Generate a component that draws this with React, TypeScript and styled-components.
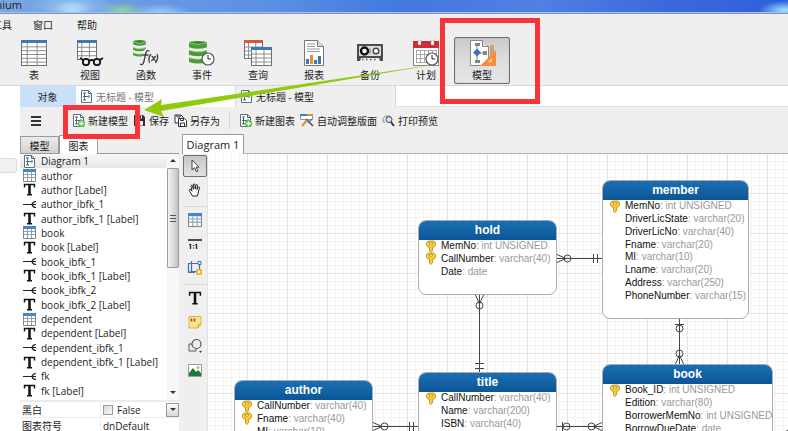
import React from "react";
import styled, { createGlobalStyle, css } from "styled-components";

const GlobalStyle = createGlobalStyle`
  *, *::before, *::after { box-sizing: border-box; }
  body {
    margin: 0;
    background: #efefef;
    color: #1c1c1c;
    font: 10px/14px "Open Sans", "Noto Sans CJK SC", sans-serif;
  }
  button, input {
    margin: 0;
    padding: 0;
    border: 0;
    background: none;
    color: inherit;
    font: inherit;
  }
  svg { display: block; flex: none; }
`;

const CJK = `"Noto Sans CJK SC", sans-serif`;

/* ---------- shell ---------- */

const Window = styled.div`
  position: relative;
  display: flex;
  flex-direction: column;
  height: 100vh;
  overflow: hidden;
`;

const TitleBar = styled.header`
  display: flex;
  flex: none;
  height: 14px;
  border-bottom: 1px solid #7f93b8;
  box-shadow: inset 0 -1px 0 #a9c0ec;
  overflow: hidden;
  background:
    radial-gradient(ellipse 20px 9px at 72px 10px, #b4dcf8, transparent),
    radial-gradient(ellipse 42px 12px at 72px 6px, #9ccaf2, transparent),
    radial-gradient(ellipse 24px 9px at 122px 11px, #8ed59a, transparent),
    radial-gradient(ellipse 30px 8px at 160px 12px, #9cc8f4, transparent),
    radial-gradient(ellipse 26px 9px at 785px 10px, #a4e6fa, transparent),
    linear-gradient(90deg, #7aa6e2 0, #6a9ce4 130px, #5a90e4 270px, #4478de 400px, #5080e2 540px, #3b6adc 660px, #2f5fdb 100%);
`;

const AppName = styled.span`
  display: flex;
  justify-content: flex-end;
  width: 22px;
  overflow: hidden;
  font-size: 11px;
  line-height: 10px;
`;

const MenuBar = styled.nav`
  display: flex;
  flex: none;
  height: 21px;
  gap: 21px;
`;

const MenuItem = styled.button<{ $clipped?: boolean }>`
  display: flex;
  align-items: center;
  justify-content: flex-end;
  width: ${(p) => (p.$clipped ? "12px" : "auto")};
  margin-right: ${(p) => (p.$clipped ? "0" : "3px")};
  overflow: hidden;
  font-family: ${CJK};
  white-space: nowrap;
`;

const Ribbon = styled.div`
  display: flex;
  flex: none;
  height: 51px;
  padding: 2px 6px 2px;
  border-bottom: 1px solid #d6d6d6;
`;

const RibbonButton = styled.button<{ $active?: boolean }>`
  display: flex;
  flex-direction: column;
  align-items: center;
  width: 56px;
  height: 47px;
  padding-top: 2px;
  gap: 1px;
  border: 1px solid transparent;
  border-radius: 2px;
  font-family: ${CJK};
  line-height: 16px;
  ${(p) =>
    p.$active &&
    css`
      border-color: #6f6f6f;
      background: linear-gradient(#c9c9c9, #dcdcdc 45%, #e6e6e6);
      box-shadow: inset 0 0 1px #888;
    `}
`;

const Body = styled.div`
  display: flex;
  flex: 1;
  min-height: 0;
`;

const ConnectionPane = styled.aside`
  flex: none;
  width: 20px;
  padding-top: 72px;
  background: #fff;
`;

const ConnectionRow = styled.div`
  height: 15px;
  margin-right: 3px;
  border: 1px solid #dcdcdc;
  border-left: 0;
  border-radius: 0 3px 3px 0;
  background: #f1f1f1;
`;

const Main = styled.main`
  display: flex;
  flex: 1;
  flex-direction: column;
  min-width: 0;
`;

const DocumentTabs = styled.div`
  display: flex;
  flex: none;
  height: 21px;
  background: #fff;
  border-bottom: 1px solid #e2e2e2;
`;

const DocumentTab = styled.button<{ $kind: "home" | "idle" | "open" }>`
  display: flex;
  align-items: center;
  justify-content: ${(p) => (p.$kind === "home" ? "center" : "flex-start")};
  width: ${(p) => (p.$kind === "home" ? "56px" : "160px")};
  height: 21px;
  padding: 0 4px;
  gap: 3px;
  border-right: 1px solid ${(p) => (p.$kind === "home" ? "transparent" : "#dadada")};
  background: ${(p) => ({ home: "#cae0fa", idle: "#fdfdfd", open: "#efefef" })[p.$kind]};
  color: ${(p) => (p.$kind === "idle" ? "#777" : "#1c1c1c")};
  font-family: ${CJK};
`;

const ActionBar = styled.div`
  display: flex;
  flex: none;
  align-items: center;
  height: 27px;
  padding-left: 10px;
  gap: 5px;
`;

const Action = styled.button`
  display: flex;
  align-items: center;
  gap: 3px;
  font-family: ${CJK};
`;

const MenuToggle = styled(Action)`
  margin-right: 25px;
`;

const ActionDivider = styled.span`
  width: 1px;
  height: 16px;
  margin: 0 4px;
  background: #d2d2d2;
`;

const Workspace = styled.div`
  display: flex;
  flex: 1;
  min-height: 0;
`;

/* ---------- explorer ---------- */

const Explorer = styled.section`
  display: flex;
  flex: none;
  flex-direction: column;
  width: 159px;
`;

const PaneTabs = styled.div`
  display: flex;
  flex: none;
  align-items: flex-end;
  height: 20px;
  border-bottom: 1px solid #9b9b9b;
`;

const PaneTab = styled.button<{ $open?: boolean }>`
  width: 39px;
  height: ${(p) => (p.$open ? "19px" : "17px")};
  margin-bottom: ${(p) => (p.$open ? "-1px" : "0")};
  border: 1px solid #9b9b9b;
  border-bottom: 0;
  background: ${(p) => (p.$open ? "#fff" : "linear-gradient(#ececec, #d2d2d2)")};
  font-family: ${CJK};
  line-height: 15px;
`;

const ListArea = styled.div`
  display: flex;
  flex: 1;
  min-height: 0;
  background: #fff;
`;

const ObjectList = styled.ul`
  display: grid;
  flex: 1;
  grid-auto-rows: 1fr;
  min-width: 0;
  margin: 0;
  padding: 0 0 2px;
  list-style: none;
`;

const ObjectRow = styled.button<{ $selected?: boolean }>`
  display: flex;
  align-items: center;
  width: 100%;
  height: 100%;
  padding-left: 3px;
  gap: 5px;
  border-radius: 2px;
  font-size: 10px;
  line-height: 14px;
  white-space: nowrap;
  ${(p) => p.$selected && css`background: linear-gradient(#f8f8f8, #e6e6e6);`}
`;

const ScrollTrack = styled.div`
  display: flex;
  flex: none;
  flex-direction: column;
  align-items: center;
  width: 12px;
  padding: 5px 0;
  gap: 5px;
  background: #f7f7f7;
`;

const ScrollThumb = styled.div`
  display: flex;
  align-items: center;
  justify-content: center;
  width: 12px;
  height: 100px;
  margin-bottom: auto;
  border: 1px solid #9c9c9c;
  border-radius: 1px;
  background: linear-gradient(90deg, #f3f3f3, #dcdcdc 50%, #c2c2c2);
`;

const Properties = styled.div`
  flex: none;
  height: 31px;
  border-top: 2px solid #ececec;
  background: #fff;
  overflow: hidden;
`;

const PropertyRow = styled.div`
  display: grid;
  grid-template-columns: 78px 1fr;
  align-items: center;
  height: 16px;
  padding-left: 2px;
  border-bottom: 1px solid #ededed;
`;

const PropertyName = styled.label`
  font-family: ${CJK};
`;

const PropertyValue = styled.div`
  display: flex;
  align-items: center;
  height: 15px;
  padding-left: 2px;
  gap: 4px;
  border-left: 1px solid #ededed;
  font-size: 10px;
`;

const Check = styled.input`
  appearance: none;
  width: 10px;
  height: 10px;
  border: 1px solid #9a9a9a;
  background: linear-gradient(135deg, #d3d8dd, #f8f8f8);
`;

const TextInput = styled.input`
  width: 100%;
`;

const DropButton = styled.button`
  display: flex;
  align-items: center;
  justify-content: center;
  width: 13px;
  height: 14px;
  margin-left: auto;
  border: 1px solid #999;
  background: linear-gradient(#fafafa, #d8d8d8);
`;

/* ---------- designer ---------- */

const Designer = styled.section`
  display: flex;
  flex: 1;
  flex-direction: column;
  min-width: 0;
  margin-left: 3px;
`;

const DiagramTabs = styled.div`
  display: flex;
  flex: none;
  height: 20px;
  border-bottom: 1px solid #b4b4b4;
`;

const DiagramTab = styled.button`
  width: 62px;
  height: 20px;
  border: 1px solid #9b9b9b;
  border-bottom: 0;
  background: #fff;
  font-size: 11px;
`;

const DesignArea = styled.div`
  display: flex;
  flex: 1;
  min-height: 0;
`;

const Palette = styled.div`
  display: flex;
  flex: none;
  flex-direction: column;
  width: 25px;
  padding: 1px 0 0 1px;
  gap: 2px;
`;

const Tool = styled.button<{ $active?: boolean }>`
  display: flex;
  align-items: center;
  justify-content: center;
  width: 24px;
  height: 22px;
  border: 1px solid ${(p) => (p.$active ? "#6f6f6f" : "transparent")};
  border-radius: 2px;
  background: ${(p) => (p.$active ? "linear-gradient(#c6c6c6, #e2e2e2)" : "none")};
`;

const ToolDivider = styled.div`
  height: 4px;
  border-bottom: 1px solid #d8d8d8;
`;

const Canvas = styled.div`
  position: relative;
  flex: 1;
  overflow: hidden;
  background-color: #fff;
  background-image:
    linear-gradient(90deg, #e2e2e2 1px, transparent 1px),
    linear-gradient(#e2e2e2 1px, transparent 1px),
    linear-gradient(90deg, #f3f3f3 1px, transparent 1px),
    linear-gradient(#f3f3f3 1px, transparent 1px);
  background-size: 40px 40px, 40px 40px, 8px 8px, 8px 8px;
  background-position: 0 39px;
`;

const Links = styled.svg`
  position: absolute;
  inset: 0;
`;

const Entity = styled.article<{ $x: number; $y: number; $w: number; $h: number }>`
  position: absolute;
  left: ${(p) => p.$x}px;
  top: ${(p) => p.$y}px;
  display: flex;
  flex-direction: column;
  width: ${(p) => p.$w}px;
  height: ${(p) => p.$h}px;
  border: 1px solid #a9adb1;
  border-radius: 8px;
  background: #fff;
  overflow: hidden;
  font: 10px/12px "Liberation Sans", Arial, sans-serif;
`;

const EntityName = styled.h2`
  flex: none;
  margin: -1px -1px 0;
  height: 20px;
  background: linear-gradient(#1c70b4, #0c5595);
  color: #fff;
  font-size: 12px;
  font-weight: 700;
  line-height: 20px;
  text-align: center;
`;

const Columns = styled.ul`
  display: grid;
  flex: 1;
  grid-auto-rows: 1fr;
  margin: 0;
  padding: 0 0 16px;
  list-style: none;
`;

const Column = styled.li`
  display: grid;
  grid-template-columns: 15px 1fr;
  align-items: center;
  min-height: 0;
  padding-left: 7px;
  color: #999;
  white-space: nowrap;
`;

const KeySlot = styled.span`
  display: flex;
  align-items: center;
  height: 12px;
`;

const ColumnName = styled.span`
  color: #111;
`;

/* ---------- annotations ---------- */

const Highlight = styled.div<{ $x: number; $y: number; $w: number; $h: number }>`
  position: absolute;
  left: ${(p) => p.$x}px;
  top: ${(p) => p.$y}px;
  width: ${(p) => p.$w}px;
  height: ${(p) => p.$h}px;
  border: 5px solid #f93439;
  pointer-events: none;
`;

const Arrow = styled.svg`
  position: absolute;
  left: 0;
  top: 0;
  pointer-events: none;
`;

/* ---------- icons ---------- */

type Size = { s?: number };

const Sheet = ({ x = 0, y = 0, w = 26, h = 26, head = "#4178b4" }) => {
  const top = y + 3;
  const rows = Math.round((h - 3) / 4);
  return (
    <g>
      <rect x={x + 0.5} y={y + 0.5} width={w - 1} height={h - 1} fill="#fff" stroke="#6f6f6f" />
      <path
        d={
          Array.from({ length: rows - 1 }, (_, i) => `M${x + 1} ${top + (i + 1) * ((h - 3) / rows)}h${w - 2}`).join("") +
          `M${x + w * 0.24} ${top}v${h - 4}M${x + w * 0.62} ${top}v${h - 4}`
        }
        stroke="#8d8d8d"
        fill="none"
      />
      <rect x={x} y={y} width={w} height={3} fill={head} />
    </g>
  );
};

const Cylinder = ({ w = 19, h = 22 }) => (
  <g fill="#4d9b36">
    {[0, 1, 2].map((i) => {
      const b = h / 3;
      const y = i * b;
      return (
        <g key={i}>
          <path d={`M0 ${y + 2}Q${w / 2} ${y + 5} ${w} ${y + 2}V${y + b - 1}Q${w / 2} ${y + b + 2} 0 ${y + b - 1}Z`} />
          {i === 0 && <ellipse cx={w / 2} cy={2} rx={w / 2} ry={2} fill="#3d8a2b" />}
          <path d={`M0 ${y + 2}Q${w / 2} ${y + 5} ${w} ${y + 2}`} fill="none" stroke="#a8d49a" strokeWidth=".8" />
        </g>
      );
    })}
  </g>
);

const Clock = ({ x = 19, y = 19, r = 6 }) => (
  <g fill="#fff" stroke="#555">
    <circle cx={x} cy={y} r={r} strokeWidth="1.2" />
    <path d={`M${x} ${y - r + 2}V${y}H${x + r - 3}`} fill="none" stroke="#222" />
  </g>
);

const Big = ({ children }: { children: React.ReactNode }) => (
  <svg width="28" height="26" viewBox="0 0 28 26" aria-hidden="true">
    {children}
  </svg>
);

const TableBig = () => <Big><Sheet x={1} /></Big>;
const ViewBig = () => (
  <Big>
    <Sheet x={1} w={20} h={20} />
    <path d="M4 18h24v8H4z" fill="#efefef" />
    <g fill="#efefef" stroke="#151515" strokeWidth="1.8">
      <circle cx="10" cy="22" r="3.2" />
      <circle cx="21" cy="22" r="3.2" />
      <path d="M13 21q2.500-2 5 0M7 20l-3-2M24 20l3-2" fill="none" />
    </g>
  </Big>
);
const FunctionBig = () => (
  <Big>
    <g transform="translate(1 0)"><Cylinder w={13} h={16} /></g>
    <path d="M17 10c-4-1-4 4-5 9-.6 3-1.500 7-4 5M10.500 14h5" stroke="#efefef" strokeWidth="4" fill="none" />
    <path d="M17.500 11c-3.500-2-4 3-5 8-.7 3.500-1.500 7-4.500 5M10.500 15h6M19 14c-2.500 3-2.500 6-1.500 9M25 14c1.500 3 .5 6-1.500 9M19.500 16.500c2-1 2 5 4.500 4M24 16.500c-2 0-3 4.500-5 4" stroke="#3f3f3f" strokeWidth="1.300" fill="none" />
  </Big>
);
const EventBig = () => <Big><g transform="translate(1 1)"><Cylinder w={18} h={22} /></g><Clock x={20} /></Big>;
const QueryBig = () => <Big><Sheet w={19} h={19} x={0} head="#d9583c" /><Sheet x={7} y={7} w={21} h={19} /></Big>;
const ReportBig = () => (
  <Big>
    <path d="M4.500.5h13l6 6v19h-19z" fill="#fff" stroke="#777" />
    <path d="M17.500.5v6h6" fill="#ddd" stroke="#777" />
    <path d="M7 4h8M7 6.500h8M7 9h13M7 11.500h13" stroke="#999" />
    <path d="M6 19h3v5H6zM18 16h3v8h-3z" fill="#3f74b5" />
    <path d="M10 15h3v9h-3z" fill="#e88b34" />
    <path d="M14 20h3v4h-3z" fill="#3f74b5" />
  </Big>
);
const BackupBig = () => (
  <Big>
    <path d="M1 4h26v17h-3l-1-3H5l-1 3H1z" fill="#4c4c4c" />
    <rect x="3" y="6" width="22" height="10" rx="1" fill="#dcdcdc" />
    <circle cx="8.500" cy="11" r="3.500" fill="#fff" stroke="#111" strokeWidth="2.400" />
    <circle cx="20" cy="11" r="2.800" fill="#fff" stroke="#444" strokeWidth="1.400" />
    <path d="M14 8.500v5" stroke="#777" />
    <path d="M6 19.500h1.500M10 19.500h1.500M14 19.500h1.500M18 19.500h1.500" stroke="#555" strokeWidth="1.500" />
  </Big>
);
const ScheduleBig = () => (
  <Big>
    <rect x="1.500" y="1.500" width="25" height="24" fill="#fff" stroke="#888" />
    <path d="M4.500 10v13M8.500 10v13M12.500 10v13M16.500 10v13M20.500 10v13M24.500 10v13M4 10.500h21M4 14.500h21M4 18.500h21M4 22.500h21" stroke="#aaa" />
    <path d="M1 1h26v7H1z" fill="#d12c36" />
    <path d="M6 0h3v5H6zM19 0h3v5h-3z" fill="#fff" stroke="#888" strokeWidth=".5" />
    <Clock x={20} y={19} />
  </Big>
);
const ModelBig = () => (
  <Big>
    <path d="M2.500.5h12l6 6v19h-18z" fill="#fff" stroke="#888" />
    <path d="M14.500.5v6h6" fill="#ddd" stroke="#888" />
    <path d="M9 5v16M9 13h8" stroke="#888" />
    <path d="M7 3h5v3H7zM7 20h5v3H7zM15 11h4v4h-4z" fill="#858585" />
    <path d="M9 8.500l4 4-4 4-4-4z" fill="#3c75b7" />
    <path d="M22 5h4v20h-4z" fill="#cda36a" />
    <path d="M28 10v16H12z" fill="#f58d3c" />
    <path d="M24 18v4h-4z" fill="#fbd4ac" />
  </Big>
);

const TableSmall = ({ s = 13 }: Size) => (
  <svg width={s} height={s} viewBox="0 0 13 13" aria-hidden="true">
    <path d="M.5.5h12v12H.5z" fill="#fff" stroke="#7b8794" />
    <path d="M0 0h13v3H0z" fill="#4484c8" />
    <path d="M1 5.500h11M1 8.500h11M4.500 3v9M8.500 3v9" stroke="#92a0ae" />
  </svg>
);
const DiagramSmall = ({ plus }: { plus?: boolean }) => (
  <svg width="13" height="13" viewBox="0 0 13 13" aria-hidden="true">
    <path d="M1.500.5h7l3 3v9h-10z" fill="#fff" stroke="#5d7078" />
    <path d="M8.500.5v3h3M4.500 3v7M4.500 6.500h4M3 3h3M3 10h3M3 6.500h3M9 5v3" fill="none" stroke="#3f6b85" />
    {plus && (
      <>
        <circle cx="9.500" cy="9.500" r="3.500" fill="#52c034" />
        <path d="M9.500 7.200v4.600M7.200 9.500h4.600" stroke="#fff" strokeWidth="1.400" />
      </>
    )}
  </svg>
);
const TextSmall = ({ s = 13 }: Size) => (
  <svg width={s} height={s} viewBox="0 0 13 13" aria-hidden="true">
    <path d="M1.500 4.500V1.500h10v3M6.500 1.500v10M4 11.800h5" fill="none" stroke="#111" strokeWidth="1.400" />
    <path d="M6.500 1v11" stroke="#111" strokeWidth="2.400" />
  </svg>
);
const RelationSmall = () => (
  <svg width="13" height="13" viewBox="0 0 13 13" aria-hidden="true">
    <path d="M0 6.500h13M13 3.500c-2 0-3.500 1-4 3 .5 2 2 3 4 3" fill="none" stroke="#222" strokeWidth="1.200" />
  </svg>
);
const MenuSmall = () => (
  <svg width="12" height="12" viewBox="0 0 12 12" aria-hidden="true">
    <path d="M1 2h10M1 6h10M1 10h10" stroke="#333" strokeWidth="2" />
  </svg>
);
const SaveSmall = () => (
  <svg width="13" height="13" viewBox="0 0 13 13" aria-hidden="true">
    <path d="M1 1h9l2 2v9H1z" fill="#303030" />
    <path d="M4 1.500h5v3H4zM3 7h7v4.500H3z" fill="#eee" />
    <path d="M7 2h1v2H7z" fill="#303030" />
  </svg>
);
const SaveAsSmall = () => (
  <svg width="13" height="13" viewBox="0 0 13 13" aria-hidden="true">
    <path d="M1 1h6l2 2v6H1z" fill="#fff" stroke="#303030" />
    <path d="M3 1v2h3V1" fill="none" stroke="#303030" />
    <path d="M4.500 4.500h6l2 2v6h-8z" fill="#fff" stroke="#303030" />
    <path d="M6.500 4.500v2h3v-2M6.500 12V9h4v3" fill="none" stroke="#303030" />
  </svg>
);
const LayoutSmall = () => (
  <svg width="14" height="13" viewBox="0 0 14 13" aria-hidden="true">
    <path d="M.5.5h12v5H.5z" fill="#fff" stroke="#8b99a5" />
    <path d="M0 0h7v2H0z" fill="#3b7fca" />
    <path d="M7 0h6v2H7z" fill="#e68a2e" />
    <path d="M6 5l7 7" stroke="#555" strokeWidth="1.600" />
    <path d="M2 12l5-6" stroke="#e68a2e" strokeWidth="2" />
    <path d="M8 9l4-4" stroke="#3b7fca" strokeWidth="1.600" />
  </svg>
);
const PreviewSmall = () => (
  <svg width="13" height="13" viewBox="0 0 13 13" aria-hidden="true">
    <path d="M1 5l2-3h5M1 5v3h2" fill="#ddd" stroke="#999" />
    <circle cx="7" cy="5.500" r="3" fill="#cfe4f6" stroke="#444" />
    <path d="M9 8l3 4" stroke="#333" strokeWidth="2" />
  </svg>
);
const Caret = ({ up }: { up?: boolean }) => (
  <svg width="6" height="4" viewBox="0 0 6 4" aria-hidden="true">
    <path d={up ? "M3 0l3 3H0z" : "M0 0h6L3 3z"} fill="#333" />
  </svg>
);
const Grip = () => (
  <svg width="6" height="7" viewBox="0 0 6 7" aria-hidden="true">
    <path d="M0 .5h6M0 3.500h6M0 6.500h6" stroke="#555" />
  </svg>
);
const KeyIcon = () => (
  <svg width="10" height="13" viewBox="0 0 10 13" aria-hidden="true">
    <path d="M2 1h6l1.500 1.500v3L8 7H7v1l-1 1 1 1-2 2.500L3.500 11V7H2L.6 5.500v-3z" fill="#f7cb32" stroke="#b98b14" strokeWidth=".8" />
    <path d="M3.500 2.500h3v1.500h-3z" fill="#fff" stroke="#a77a10" strokeWidth=".6" />
  </svg>
);
const T = ({ children }: { children: React.ReactNode }) => (
  <svg width="16" height="16" viewBox="0 0 16 16" fill="none" aria-hidden="true">
    {children}
  </svg>
);
const CursorTool = () => (
  <T><path d="M5 2v10l2.500-2.300 1.800 4 1.600-.7-1.800-3.800H12z" fill="#fff" stroke="#444" /></T>
);
const HandTool = () => (
  <T>
    <path d="M5.500 14L2.800 9.500C1.500 7.500 3 6.800 4 8l1 1.200L4 4.500c-.3-1.700 1.400-1.700 1.700-.3l.7 3-.2-4.200c0-1.500 1.700-1.500 1.800 0l.2 4 .6-3.600c.3-1.400 1.800-1.100 1.600.2L10 7.500l.9-2c.6-1.300 2-.6 1.500.7-1 2.500-.9 5-2.200 7.800z" fill="#fff" stroke="#222" />
  </T>
);
const RatioTool = () => (
  <T>
    <path d="M1 4h14" stroke="#222" strokeWidth="1.600" />
    <path d="M3.500 8v5M2.500 9l1-1M9.500 8v5M8.500 9l1-1M6.500 9v1M6.500 11.500v1" stroke="#222" strokeWidth="1.300" />
  </T>
);
const LayerTool = () => (
  <T>
    <path d="M4.500 1v10.500H15M4.500 3.500h8V11M1 3.500h3.500M1.500 3v9.500H8M1.500 12.500l3-1" stroke="#3f70bd" strokeWidth="1.200" />
    <path d="M11 1.500h3v3h-3z" fill="#efefef" stroke="#3f70bd" />
    <path d="M9 9h6v6H9z" fill="#edb93b" />
    <circle cx="12" cy="12" r="1.200" fill="#fff" />
  </T>
);
const NoteTool = () => (
  <T>
    <path d="M2 2.500h12v8l-3 3.500H2z" fill="#fbe58a" stroke="#d5b64c" />
    <path d="M14 10.500h-3V14" fill="#e9cc62" stroke="#d5b64c" />
    <path d="M4.500 4.500v3M7.500 4.500v3" stroke="#a4482a" strokeWidth="1.600" />
  </T>
);
const ShapesTool = () => (
  <T>
    <path d="M2 6h7v7H2z" stroke="#555" fill="#eee" />
    <circle cx="9.500" cy="6" r="4.500" fill="#eee" stroke="#555" strokeWidth="1.200" />
    <path d="M12 13h3l-1.500 2z" fill="#333" />
  </T>
);
const ImageTool = () => (
  <T>
    <path d="M1.500 2.500h13v12h-13z" fill="#fff" stroke="#999" />
    <path d="M2 14v-3l4-5 3 4 2-2 3 3v3z" fill="#1f7a34" />
    <circle cx="11" cy="5.500" r="1.500" fill="#ee9c8d" />
  </T>
);

/* ---------- data ---------- */

const ribbon: [string, () => React.ReactElement][] = [
  ["表", TableBig],
  ["视图", ViewBig],
  ["函数", FunctionBig],
  ["事件", EventBig],
  ["查询", QueryBig],
  ["报表", ReportBig],
  ["备份", BackupBig],
  ["计划", ScheduleBig],
  ["模型", ModelBig],
];

type Kind = "diagram" | "table" | "label" | "relation";

const objects: [string, Kind][] = [
  ["Diagram 1", "diagram"],
  ["author", "table"],
  ["author [Label]", "label"],
  ["author_ibfk_1", "relation"],
  ["author_ibfk_1 [Label]", "label"],
  ["book", "table"],
  ["book [Label]", "label"],
  ["book_ibfk_1", "relation"],
  ["book_ibfk_1 [Label]", "label"],
  ["book_ibfk_2", "relation"],
  ["book_ibfk_2 [Label]", "label"],
  ["dependent", "table"],
  ["dependent [Label]", "label"],
  ["dependent_ibfk_1", "relation"],
  ["dependent_ibfk_1 [Label]", "label"],
  ["fk", "relation"],
  ["fk [Label]", "label"],
];

const kindIcon: Record<Kind, React.ReactElement> = {
  diagram: <DiagramSmall />,
  table: <TableSmall />,
  label: <TextSmall />,
  relation: <RelationSmall />,
};

const entities: { name: string; x: number; y: number; w: number; h: number; cols: [string, string, boolean?][] }[] = [
  {
    name: "hold", x: 211, y: 66, w: 139, h: 75,
    cols: [["MemNo", "int UNSIGNED", true], ["CallNumber", "varchar(40)", true], ["Date", "date"]],
  },
  {
    name: "member", x: 395, y: 26, w: 147, h: 139,
    cols: [
      ["MemNo", "int UNSIGNED", true],
      ["DriverLicState", "varchar(20)"],
      ["DriverLicNo", "varchar(40)"],
      ["Fname", "varchar(20)"],
      ["MI", "varchar(10)"],
      ["Lname", "varchar(20)"],
      ["Address", "varchar(250)"],
      ["PhoneNumber", "varchar(15)"],
    ],
  },
  {
    name: "author", x: 27, y: 226, w: 139, h: 75,
    cols: [["CallNumber", "varchar(40)", true], ["Fname", "varchar(40)", true], ["MI", "varchar(10)"]],
  },
  {
    name: "title", x: 211, y: 218, w: 139, h: 75,
    cols: [["CallNumber", "varchar(40)", true], ["Name", "varchar(200)"], ["ISBN", "varchar(40)"]],
  },
  {
    name: "book", x: 395, y: 210, w: 171, h: 88,
    cols: [
      ["Book_ID", "int UNSIGNED", true],
      ["Edition", "varchar(80)"],
      ["BorrowerMemNo", "int UNSIGNED"],
      ["BorrowDueDate", "date"],
    ],
  },
];

const tools: (null | [string, React.ReactElement])[] = [
  ["Select", <CursorTool />],
  ["Pan", <HandTool />],
  null,
  ["Table", <TableSmall s={14} />],
  ["Relation", <RatioTool />],
  ["Layer", <LayerTool />],
  null,
  ["Label", <TextSmall s={14} />],
  ["Note", <NoteTool />],
  ["Shape", <ShapesTool />],
  ["Image", <ImageTool />],
];

export default function App() {
  return (
    <Window>
      <GlobalStyle />
      <TitleBar>
        <AppName>mium</AppName>
      </TitleBar>
      <MenuBar>
        <MenuItem $clipped>工具</MenuItem>
        <MenuItem>窗口</MenuItem>
        <MenuItem>帮助</MenuItem>
      </MenuBar>
      <Ribbon>
        {ribbon.map(([label, Icon]) => (
          <RibbonButton key={label} $active={label === "模型"}>
            <Icon />
            {label}
          </RibbonButton>
        ))}
      </Ribbon>
      <Body>
        <ConnectionPane>
          <ConnectionRow />
        </ConnectionPane>
        <Main>
          <DocumentTabs>
            <DocumentTab $kind="home">对象</DocumentTab>
            <DocumentTab $kind="idle"><DiagramSmall />无标题 - 模型</DocumentTab>
            <DocumentTab $kind="open"><DiagramSmall />无标题 - 模型</DocumentTab>
          </DocumentTabs>
          <ActionBar>
            <MenuToggle aria-label="Menu"><MenuSmall /></MenuToggle>
            <Action><DiagramSmall plus />新建模型</Action>
            <Action><SaveSmall />保存</Action>
            <Action><SaveAsSmall />另存为</Action>
            <ActionDivider />
            <Action><DiagramSmall plus />新建图表</Action>
            <Action><LayoutSmall />自动调整版面</Action>
            <Action><PreviewSmall />打印预览</Action>
          </ActionBar>
          <Workspace>
            <Explorer>
              <PaneTabs>
                <PaneTab>模型</PaneTab>
                <PaneTab $open>图表</PaneTab>
              </PaneTabs>
              <ListArea>
                <ObjectList>
                  {objects.map(([name, kind]) => (
                    <li key={name}>
                      <ObjectRow $selected={kind === "diagram"}>
                        {kindIcon[kind]}
                        {name}
                      </ObjectRow>
                    </li>
                  ))}
                </ObjectList>
                <ScrollTrack>
                  <Caret up />
                  <ScrollThumb><Grip /></ScrollThumb>
                  <Caret />
                </ScrollTrack>
              </ListArea>
              <Properties>
                <PropertyRow>
                  <PropertyName htmlFor="mono">黑白</PropertyName>
                  <PropertyValue>
                    <Check id="mono" type="checkbox" />
                    False
                    <DropButton aria-label="Choose value"><Caret /></DropButton>
                  </PropertyValue>
                </PropertyRow>
                <PropertyRow>
                  <PropertyName htmlFor="notation">图表符号</PropertyName>
                  <PropertyValue>
                    <TextInput id="notation" defaultValue="dnDefault" />
                  </PropertyValue>
                </PropertyRow>
              </Properties>
            </Explorer>
            <Designer>
              <DiagramTabs>
                <DiagramTab>Diagram 1</DiagramTab>
              </DiagramTabs>
              <DesignArea>
                <Palette>
                  {tools.map((tool, i) =>
                    tool ? (
                      <Tool key={i} aria-label={tool[0]} $active={i === 0}>{tool[1]}</Tool>
                    ) : (
                      <ToolDivider key={i} />
                    )
                  )}
                </Palette>
                <Canvas>
                  <Links width="100%" height="100%" fill="none" stroke="#444">
                    <path d="M350 104.500h45M350 100.500l9 4-9 4M386.500 100v9M390.500 100v9" />
                    <circle cx="360.500" cy="104.500" r="3.500" />
                    <path d="M272.500 141v77M268.500 141l4 9 4-9M268 209.500h9M268 214.500h9" />
                    <circle cx="272.500" cy="151.500" r="3.500" />
                    <path d="M472.500 165v45M468.500 210l4-9 4 9M468 170.500h9" />
                    <circle cx="472.500" cy="174.500" r="3.500" />
                    <circle cx="472.500" cy="199.500" r="3.500" />
                    <path d="M166 272.500h45M166 268.500l9 4-9 4M202.500 268v9M206.500 268v9" />
                    <circle cx="177.500" cy="272.500" r="3.500" />
                    <path d="M350 272.500h45M355.500 268v9M395 268.500l-9 4 9 4" />
                    <circle cx="359.500" cy="272.500" r="3.500" />
                    <circle cx="384.500" cy="272.500" r="3.500" />
                    <path d="M576 279l5-3" />
                  </Links>
                  {entities.map((e) => (
                    <Entity key={e.name} $x={e.x} $y={e.y} $w={e.w} $h={e.h}>
                      <EntityName>{e.name}</EntityName>
                      <Columns>
                        {e.cols.map(([name, type, key]) => (
                          <Column key={name}>
                            <KeySlot>{key && <KeyIcon />}</KeySlot>
                            <span><ColumnName>{name}</ColumnName>: {type}</span>
                          </Column>
                        ))}
                      </Columns>
                    </Entity>
                  ))}
                </Canvas>
              </DesignArea>
            </Designer>
          </Workspace>
        </Main>
      </Body>
      <Arrow width="445" height="125" viewBox="0 0 445 125" aria-hidden="true">
        <path d="M144 110l18-11-1 6 277-41-277 47 3 6z" fill="#8fca0c" />
      </Arrow>
      <Highlight $x={440} $y={18} $w={100} $h={86} />
      <Highlight $x={63} $y={105} $w={77} $h={34} />
    </Window>
  );
}
